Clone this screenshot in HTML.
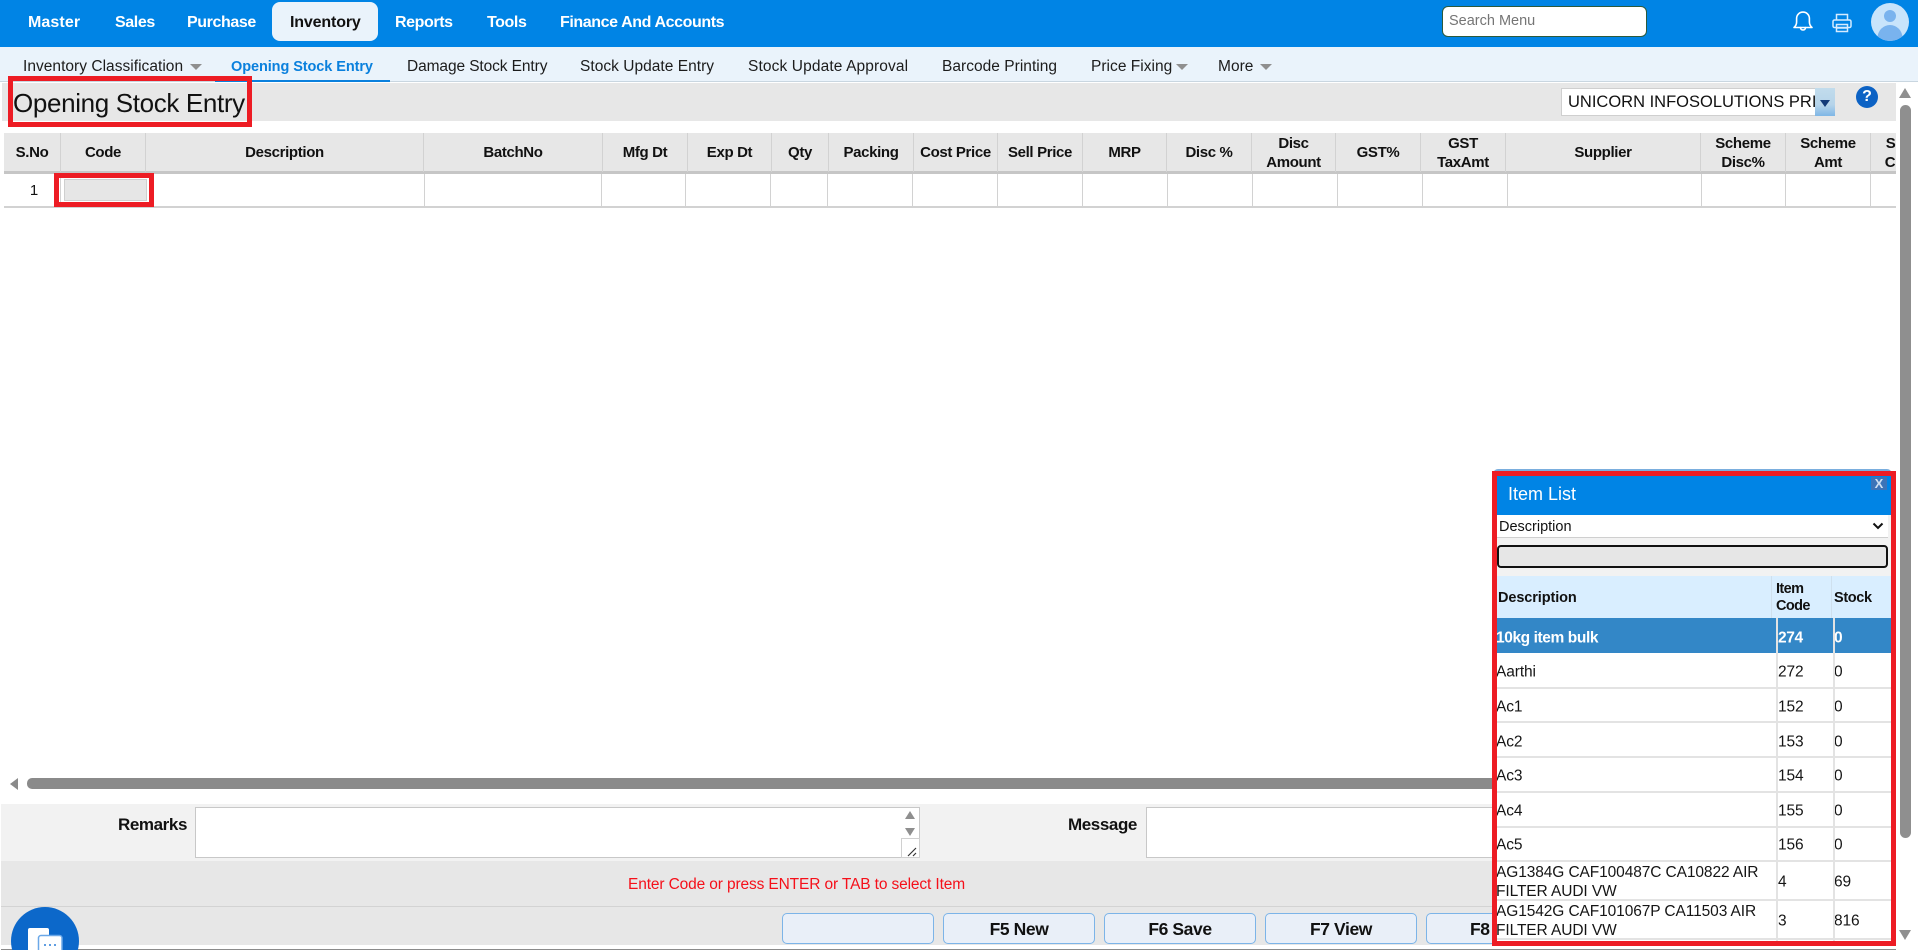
<!DOCTYPE html>
<html>
<head>
<meta charset="utf-8">
<title>Opening Stock Entry</title>
<style>
html,body{margin:0;padding:0;background:#fff;}
body{width:1918px;height:950px;overflow:hidden;position:relative;font-family:"Liberation Sans",Arial,sans-serif;color:#111;}
.a{position:absolute;box-sizing:border-box;}
.t{position:absolute;white-space:nowrap;line-height:20px;height:20px;}
.nav{color:#fff;font-weight:bold;font-size:16px;top:13px;letter-spacing:-.4px;}
.sub{font-size:15.5px;top:57px;color:#1c1c1c;letter-spacing:.03px;}
.arr{position:absolute;top:64px;width:0;height:0;border-left:6px solid transparent;border-right:6px solid transparent;border-top:6px solid #8f8f8f;}
.th{position:absolute;top:133px;height:39px;box-sizing:border-box;border-right:1px solid #d2d2d2;display:flex;align-items:center;justify-content:center;text-align:center;font-weight:bold;font-size:15px;line-height:19px;letter-spacing:-.35px;color:#111;}
.vl{position:absolute;top:174px;height:33px;width:1px;background:#d2d2d2;}
.btn{position:absolute;top:913px;height:31px;width:152px;box-sizing:border-box;background:#e9eff8;border:1px solid #7cb4e8;border-radius:5px;font-weight:bold;font-size:17.5px;line-height:31px;text-align:center;color:#111;letter-spacing:-.4px;}
.row{position:absolute;left:1497px;width:394px;background:#fff;border-bottom:2px solid #e3e3e3;box-sizing:border-box;font-size:15.5px;line-height:19px;color:#151515;letter-spacing:-.1px;}
.row span{position:absolute;top:50%;transform:translateY(calc(-50% + 2px));white-space:nowrap;}
.row.w span{transform:translateY(calc(-50% + 1px));}
.c1{left:-1px;width:285px;white-space:normal !important;}
.c2{left:281px;}
.c3{left:337px;}
.vp{position:absolute;width:2px;background:#e3e3e3;top:618px;height:323px;}
</style>
</head>
<body>

<!-- top bar -->
<div class="a" style="left:0;top:0;width:1918px;height:47px;background:#0084e5;"></div>
<div class="a" style="left:272px;top:2px;width:106px;height:39px;background:#eaf3fb;border-radius:8px;"></div>
<div class="t nav" style="left:28px;letter-spacing:.1px;">Master</div>
<div class="t nav" style="left:115px;">Sales</div>
<div class="t nav" style="left:187px;">Purchase</div>
<div class="t nav" style="left:290px;color:#111;letter-spacing:-.15px;">Inventory</div>
<div class="t nav" style="left:395px;">Reports</div>
<div class="t nav" style="left:487px;">Tools</div>
<div class="t nav" style="left:560px;">Finance And Accounts</div>

<div class="a" style="left:1442px;top:6px;width:205px;height:31px;background:#fff;border:1px solid #2c5a3c;border-radius:6px;"></div>
<div class="t" style="left:1449px;top:11px;font-size:14.5px;color:#757575;">Search Menu</div>

<svg class="a" style="left:1791px;top:9px;" width="24" height="24" viewBox="0 0 24 24" fill="none" stroke="#fff" stroke-width="1.6" stroke-linejoin="round" stroke-linecap="round">
<path d="M3 18.5c1.6-1.4 2.6-2.6 2.6-5.5V9.5a6.4 6.4 0 0 1 12.8 0V13c0 2.900 1 4.100 2.600 5.500z"/>
<path d="M9.500 18.500c0 3.300 5 3.300 5 0"/>
</svg>
<svg class="a" style="left:1832px;top:13px;" width="20" height="20" viewBox="0 0 20 20" fill="none" stroke="#d5ebff" stroke-width="1.500">
<path d="M4.500 7V1.500h11V7"/>
<rect x="1" y="7" width="18" height="7.500" rx="1.500"/>
<rect x="4.500" y="11.500" width="11" height="7"/>
<path d="M4.500 15h11"/>
</svg>
<svg class="a" style="left:1871px;top:3px;" width="38" height="38" viewBox="0 0 38 38">
<defs><clipPath id="av"><circle cx="19" cy="19" r="19"/></clipPath></defs>
<circle cx="19" cy="19" r="19" fill="#c8e4fb"/>
<g clip-path="url(#av)" fill="#79b3ee"><circle cx="19" cy="13" r="6"/><ellipse cx="19" cy="35" rx="12.500" ry="13"/></g>
</svg>

<!-- sub nav -->
<div class="a" style="left:0;top:47px;width:1918px;height:35px;background:#eaf3fb;border-bottom:1px solid #c9d6e0;"></div>
<div class="a" style="left:215px;top:80px;width:175px;height:2px;background:#0a80dd;"></div>
<div class="t sub" style="left:23px;">Inventory Classification</div>
<div class="arr" style="left:190px;"></div>
<div class="t sub" style="left:231px;color:#0a80dd;font-weight:bold;font-size:14.500px;letter-spacing:-.08px;">Opening Stock Entry</div>
<div class="t sub" style="left:407px;letter-spacing:-.1px;">Damage Stock Entry</div>
<div class="t sub" style="left:580px;">Stock Update Entry</div>
<div class="t sub" style="left:748px;letter-spacing:.12px;">Stock Update Approval</div>
<div class="t sub" style="left:942px;">Barcode Printing</div>
<div class="t sub" style="left:1091px;">Price Fixing</div>
<div class="arr" style="left:1176px;"></div>
<div class="t sub" style="left:1218px;">More</div>
<div class="arr" style="left:1260px;"></div>

<!-- title bar -->
<div class="a" style="left:2px;top:83px;width:1894px;height:38px;background:#e7e7e7;"></div>
<div class="t" style="left:13px;top:88px;height:30px;line-height:30px;font-size:26px;color:#111;letter-spacing:-.35px;">Opening Stock Entry</div>
<div class="a" style="left:8px;top:76px;width:244px;height:51px;border:5px solid #ed1c24;"></div>

<div class="a" style="left:1561px;top:88px;width:274px;height:28px;background:#fff;border:1px solid #cfcfcf;"></div>
<div class="a" style="left:1562px;top:89px;width:253px;height:26px;overflow:hidden;font-size:16.500px;line-height:26px;padding-left:6px;color:#111;white-space:nowrap;">UNICORN INFOSOLUTIONS PRIVATE</div>
<div class="a" style="left:1815px;top:88px;width:20px;height:28px;background:linear-gradient(#c2dcec,#b6d4ea 60%,#7fb6e6);"></div>
<div class="a" style="left:1820px;top:100px;width:0;height:0;border-left:5px solid transparent;border-right:5px solid transparent;border-top:7px solid #123a78;"></div>
<div class="a" style="left:1856px;top:86px;width:22px;height:22px;border-radius:50%;background:#0c62c4;color:#fff;font-weight:bold;font-size:16px;line-height:22px;text-align:center;">?</div>

<!-- grid -->
<div class="a" style="left:4px;top:133px;width:1892px;height:39px;background:#e7e7e7;"></div>
<div class="a" style="left:4px;top:171px;width:1892px;height:3px;background:#c6c6c6;"></div>
<div class="a" style="left:4px;top:206px;width:1892px;height:2px;background:#d2d2d2;"></div>
<div class="a" style="left:0;top:133px;width:1896px;height:75px;overflow:hidden;">
<div class="th" style="left:4px;top:0;width:57px;">S.No</div>
<div class="th" style="left:61px;top:0;width:85px;">Code</div>
<div class="th" style="left:146px;top:0;width:278px;">Description</div>
<div class="th" style="left:424px;top:0;width:179px;">BatchNo</div>
<div class="th" style="left:603px;top:0;width:85px;">Mfg Dt</div>
<div class="th" style="left:688px;top:0;width:84px;">Exp Dt</div>
<div class="th" style="left:772px;top:0;width:57px;">Qty</div>
<div class="th" style="left:829px;top:0;width:85px;">Packing</div>
<div class="th" style="left:914px;top:0;width:84px;">Cost Price</div>
<div class="th" style="left:998px;top:0;width:85px;">Sell Price</div>
<div class="th" style="left:1083px;top:0;width:84px;">MRP</div>
<div class="th" style="left:1167px;top:0;width:85px;">Disc %</div>
<div class="th" style="left:1252px;top:0;width:84px;">Disc<br>Amount</div>
<div class="th" style="left:1336px;top:0;width:85px;">GST%</div>
<div class="th" style="left:1421px;top:0;width:85px;">GST<br>TaxAmt</div>
<div class="th" style="left:1506px;top:0;width:195px;">Supplier</div>
<div class="th" style="left:1701px;top:0;width:85px;">Scheme<br>Disc%</div>
<div class="th" style="left:1786px;top:0;width:85px;">Scheme<br>Amt</div>
<div class="th" style="left:1871px;top:0;width:85px;border-right:0;">Scheme<br>Charges</div>
</div>
<div class="vl" style="left:60px;"></div>
<div class="vl" style="left:424px;"></div><div class="vl" style="left:601px;"></div>
<div class="vl" style="left:685px;"></div><div class="vl" style="left:770px;"></div>
<div class="vl" style="left:827px;"></div><div class="vl" style="left:912px;"></div>
<div class="vl" style="left:997px;"></div><div class="vl" style="left:1082px;"></div>
<div class="vl" style="left:1167px;"></div><div class="vl" style="left:1252px;"></div>
<div class="vl" style="left:1337px;"></div><div class="vl" style="left:1422px;"></div>
<div class="vl" style="left:1507px;"></div><div class="vl" style="left:1701px;"></div>
<div class="vl" style="left:1785px;"></div><div class="vl" style="left:1870px;"></div>
<div class="t" style="left:4px;top:181px;width:60px;text-align:center;font-size:15px;">1</div>
<div class="a" style="left:64px;top:179px;width:83px;height:22px;background:#e6e6e6;border:1px solid #cfcfcf;"></div>
<div class="a" style="left:54px;top:173px;width:100px;height:34px;border:5px solid #ed1c24;"></div>

<!-- h scroll -->
<div class="a" style="left:10px;top:778px;width:0;height:0;border-top:6px solid transparent;border-bottom:6px solid transparent;border-right:8px solid #8a8a8a;"></div>
<div class="a" style="left:27px;top:778px;width:1480px;height:11px;background:#8a8a8a;border-radius:5px 0 0 5px;"></div>

<!-- remarks -->
<div class="a" style="left:1px;top:804px;width:1895px;height:57px;background:#f2f2f2;"></div>
<div class="t" style="left:100px;top:815px;width:87px;text-align:right;font-weight:bold;font-size:17px;letter-spacing:-.4px;color:#111;">Remarks</div>
<div class="a" style="left:195px;top:807px;width:725px;height:51px;background:#fff;border:1px solid #c8c8c8;"></div>
<div class="a" style="left:905px;top:811px;width:0;height:0;border-left:5px solid transparent;border-right:5px solid transparent;border-bottom:8px solid #8f8f8f;"></div>
<div class="a" style="left:905px;top:828px;width:0;height:0;border-left:5px solid transparent;border-right:5px solid transparent;border-top:8px solid #8f8f8f;"></div>
<div class="a" style="left:901px;top:838px;width:19px;height:20px;background:#fff;border:1px solid #d0d0d0;"></div>
<svg class="a" style="left:907px;top:846px;" width="11" height="11" viewBox="0 0 11 11" stroke="#333" stroke-width="1.200" fill="none"><path d="M1 10L9 2M6 10l3-3"/></svg>
<div class="t" style="left:1040px;top:815px;width:97px;text-align:right;font-weight:bold;font-size:17px;letter-spacing:-.4px;color:#111;">Message</div>
<div class="a" style="left:1146px;top:807px;width:360px;height:51px;background:#fff;border:1px solid #c8c8c8;"></div>

<!-- status + buttons -->
<div class="a" style="left:1px;top:861px;width:1895px;height:84px;background:#e7e7e7;"></div>
<div class="a" style="left:1px;top:906px;width:1895px;height:1px;background:#d3d3d3;"></div>
<div class="t" style="left:628px;top:875px;font-size:15.500px;color:#f5101a;letter-spacing:-.13px;">Enter Code or press ENTER or TAB to select Item</div>
<div class="btn" style="left:782px;"></div>
<div class="btn" style="left:943px;">F5 New</div>
<div class="btn" style="left:1104px;">F6 Save</div>
<div class="btn" style="left:1265px;">F7 View</div>
<div class="btn" style="left:1426px;text-align:left;padding-left:43px;">F8 Print</div>
<div class="a" style="left:1px;top:949px;width:1895px;height:1px;background:#8a8a8a;"></div>

<!-- chat bubble -->
<svg class="a" style="left:11px;top:907px;" width="68" height="43" viewBox="0 0 68 43">
<circle cx="34" cy="34" r="34" fill="#0c68ca"/>
<path d="M19 21h17a2 2 0 0 1 2 2v21H17V23a2 2 0 0 1 2-2z" fill="#fff"/>
<rect x="27.500" y="28.500" width="23.500" height="18" rx="2.500" fill="#fff" stroke="#6ba8e8" stroke-width="1.500"/>
<circle cx="34" cy="38" r="1" fill="#2d7fd8"/><circle cx="39" cy="38" r="1" fill="#2d7fd8"/><circle cx="44" cy="38" r="1" fill="#2d7fd8"/>
</svg>

<!-- v scroll -->
<div class="a" style="left:1899px;top:88px;width:0;height:0;border-left:6.500px solid transparent;border-right:6.500px solid transparent;border-bottom:10px solid #8f8f8f;"></div>
<div class="a" style="left:1900px;top:105px;width:11px;height:733px;background:#8f8f8f;border-radius:6px;"></div>
<div class="a" style="left:1899px;top:930px;width:0;height:0;border-left:6.500px solid transparent;border-right:6.500px solid transparent;border-top:10px solid #8f8f8f;"></div>

<!-- popup -->
<div class="a" style="left:1493px;top:469px;width:399px;height:8px;background:#7aaede;border-radius:5px 5px 0 0;"></div>
<div class="a" style="left:1497px;top:476px;width:394px;height:465px;background:#f2f2f2;"></div>
<div class="a" style="left:1497px;top:476px;width:394px;height:39px;background:#0084e5;"></div>
<div class="t" style="left:1508px;top:482px;height:24px;line-height:24px;font-size:18px;color:#fff;">Item List</div>
<div class="a" style="left:1871px;top:477px;width:16px;height:13px;background:#3c74b8;color:#cfe0f2;font-weight:bold;font-size:13px;line-height:13px;text-align:center;">X</div>
<div class="a" style="left:1497px;top:515px;width:391px;height:23px;background:#fff;border-bottom:1px solid #cfcfcf;"></div>
<div class="t" style="left:1499px;top:517px;font-size:14.500px;color:#111;">Description</div>
<svg class="a" style="left:1872px;top:522px;" width="12" height="9" viewBox="0 0 12 9" fill="none" stroke="#111" stroke-width="2"><path d="M1.500 1.500L6 6l4.500-4.500"/></svg>
<div class="a" style="left:1497px;top:545px;width:391px;height:23px;background:#e6e6e6;border:2px solid #111;border-radius:4px;"></div>
<div class="a" style="left:1497px;top:576px;width:394px;height:42px;background:#d9eeff;"></div>
<div class="a" style="left:1771px;top:576px;width:1px;height:42px;background:#cfe0ee;"></div>
<div class="a" style="left:1831px;top:576px;width:1px;height:42px;background:#cfe0ee;"></div>
<div class="t" style="left:1498px;top:588px;font-size:14.500px;font-weight:bold;letter-spacing:-.1px;">Description</div>
<div class="a" style="left:1776px;top:581px;font-size:14.500px;font-weight:bold;line-height:17px;letter-spacing:-.6px;">Item<br>Code</div>
<div class="t" style="left:1834px;top:588px;font-size:14.500px;font-weight:bold;letter-spacing:-.35px;">Stock</div>

<div class="row" style="top:618px;height:35px;background:#3387c7;color:#fff;font-weight:bold;border:0;letter-spacing:-.4px;"><span class="c1">10kg item bulk</span><span class="c2">274</span><span class="c3">0</span></div>
<div class="row" style="top:653px;height:36px;"><span class="c1">Aarthi</span><span class="c2">272</span><span class="c3">0</span></div>
<div class="row" style="top:689px;height:34px;"><span class="c1">Ac1</span><span class="c2">152</span><span class="c3">0</span></div>
<div class="row" style="top:723px;height:35px;"><span class="c1">Ac2</span><span class="c2">153</span><span class="c3">0</span></div>
<div class="row w" style="top:758px;height:35px;"><span class="c1">Ac3</span><span class="c2">154</span><span class="c3">0</span></div>
<div class="row w" style="top:793px;height:35px;"><span class="c1">Ac4</span><span class="c2">155</span><span class="c3">0</span></div>
<div class="row w" style="top:828px;height:34px;"><span class="c1">Ac5</span><span class="c2">156</span><span class="c3">0</span></div>
<div class="row w" style="top:862px;height:39px;"><span class="c1">AG1384G CAF100487C CA10822 AIR FILTER AUDI VW</span><span class="c2">4</span><span class="c3">69</span></div>
<div class="row w" style="top:901px;height:39px;"><span class="c1">AG1542G CAF101067P CA11503 AIR FILTER AUDI VW</span><span class="c2">3</span><span class="c3">816</span></div>
<div class="row" style="top:940px;height:1px;border:0;"></div>
<div class="vp" style="left:1776px;"></div>
<div class="vp" style="left:1833px;"></div>
<div class="a" style="left:1492px;top:471px;width:404px;height:475px;border:5px solid #ed1c24;"></div>

</body>
</html>
